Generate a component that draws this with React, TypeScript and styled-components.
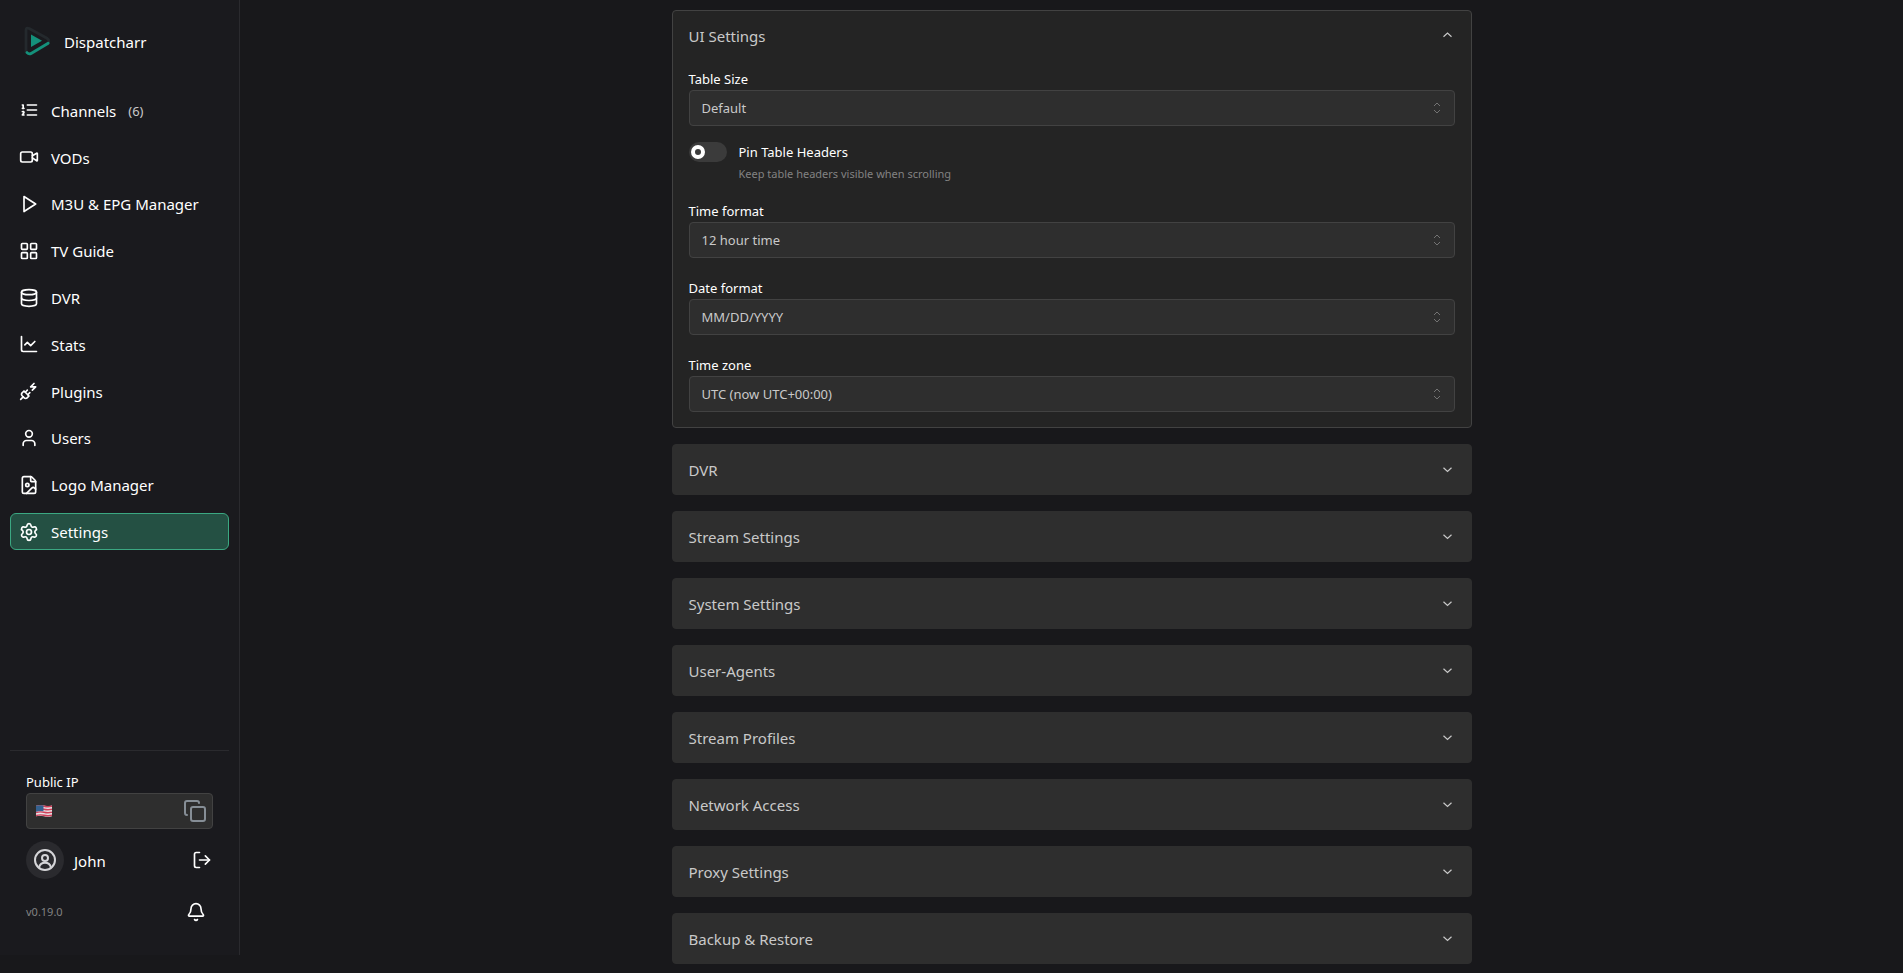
import React from "react";
import styled, { createGlobalStyle } from "styled-components";
import {
  Video, LayoutGrid, Database, ChartLine, PlugZap, User,
  FileImage, Settings, Copy, LogOut, Bell,
} from "lucide-react";

const GlobalStyle = createGlobalStyle`
  *, *::before, *::after { box-sizing: border-box; }
  html, body, #root { height: 100%; }
  body {
    margin: 0;
    background: #18181b;
    color: #fff;
    font: 15px/24px "Segoe UI", "Noto Sans", sans-serif;
  }
  button, input, select { font: inherit; color: inherit; }
`;

const Shell = styled.div`
  display: flex;
  align-items: stretch;
  min-height: 100vh;
  overflow: hidden;
`;

const Sidebar = styled.aside`
  display: flex;
  flex-direction: column;
  flex: none;
  width: 240px;
  margin-bottom: 18px;
  padding: 16px 10px;
  background: #1a1a1e;
  border-right: 1px solid #2a2a2e;
`;

const Brand = styled.div`
  display: flex;
  align-items: center;
  gap: 12px;
  height: 52px;
  padding-left: 12px;
`;

const NavList = styled.ul`
  display: grid;
  grid-auto-rows: 1fr;
  gap: 10px;
  height: 458px;
  margin: 24px 0 0;
  padding: 0;
  list-style: none;
`;

const NavLink = styled.a<{ $active?: boolean }>`
  display: flex;
  align-items: center;
  gap: 12px;
  height: 100%;
  padding: 0 8px;
  border: 1px solid ${(p) => (p.$active ? "#3ba882" : "transparent")};
  border-radius: 6px;
  background: ${(p) => (p.$active ? "#245043" : "transparent")};
  color: #fff;
  text-decoration: none;
`;

const NavText = styled.span`
  padding-top: 1px;
`;

const NavCount = styled.span`
  padding-top: 1px;
  font-size: 13px;
  color: #c9c9c9;
`;

const Footer = styled.div`
  display: flex;
  flex-direction: column;
  margin-top: auto;
  padding: 20px 16px 8px;
  border-top: 1px solid #2a2a2e;
`;

const FieldLabel = styled.label`
  display: block;
  font-size: 13px;
  line-height: 22px;
`;

const IpBox = styled.div`
  display: flex;
  align-items: center;
  height: 36px;
  padding: 0 5px 0 9px;
  border: 1px solid #424242;
  border-radius: 4px;
  background: #2e2e2e;
`;

const IpInput = styled.input`
  flex: 1;
  min-width: 0;
  border: 0;
  background: none;
  outline: 0;
`;

const IconButton = styled.button<{ $color?: string }>`
  display: flex;
  padding: 0;
  border: 0;
  background: none;
  color: ${(p) => p.$color ?? "#fff"};
`;

const UserRow = styled.div`
  display: flex;
  align-items: center;
  gap: 10px;
  margin-top: 12px;
  padding-right: 1px;
`;

const Avatar = styled.div`
  display: grid;
  place-items: center;
  width: 38px;
  height: 38px;
  border-radius: 50%;
  background: #2a2a2e;
  color: #d5d5d8;
`;

const UserName = styled.span`
  flex: 1;
  padding-top: 2px;
`;

const VersionRow = styled.div`
  display: flex;
  align-items: center;
  justify-content: space-between;
  height: 38px;
  margin-top: 14px;
  padding-right: 7px;
  font-size: 11px;
  color: #828282;
`;

const Main = styled.main`
  flex: 1;
  min-width: 0;
  padding: 10px 16px 0;
`;

const Accordion = styled.div`
  display: flex;
  flex-direction: column;
  gap: 16px;
  max-width: 800px;
  margin: 0 auto;
`;

const Item = styled.section<{ $open?: boolean }>`
  border: 1px solid ${(p) => (p.$open ? "#424242" : "#2e2e2e")};
  border-radius: 4px;
  background: ${(p) => (p.$open ? "#242424" : "#2e2e2e")};
`;

const ItemControl = styled.button`
  display: flex;
  align-items: center;
  justify-content: space-between;
  width: 100%;
  height: 49px;
  padding: 0 16px;
  border: 0;
  background: none;
  color: #c9c9c9;
  text-align: left;
`;

const Panel = styled.div`
  display: flex;
  flex-direction: column;
  gap: 19px;
  padding: 8px 16px 15px;
`;

const SelectBox = styled.div`
  display: grid;
  align-items: center;
  > * { grid-area: 1 / 1; }
  > svg { justify-self: end; margin-right: 11px; pointer-events: none; }
`;

const Select = styled.select`
  appearance: none;
  width: 100%;
  height: 36px;
  padding: 0 32px 0 12px;
  border: 1px solid #424242;
  border-radius: 4px;
  background: #2e2e2e;
  color: #c9c9c9;
  font-size: 13px;
`;

const SwitchRow = styled.div`
  display: grid;
  grid-template-columns: 38px 1fr;
  grid-template-rows: 20px auto;
  align-items: center;
  column-gap: 12px;
  margin: -3px 0 -1px;
`;

const Switch = styled.input`
  appearance: none;
  display: flex;
  align-items: center;
  width: 38px;
  height: 20px;
  margin: 0;
  padding: 0 2px;
  border-radius: 10px;
  background: #3b3b3b;
  &::before {
    content: "";
    width: 14px;
    height: 14px;
    border: 4px solid #fff;
    border-radius: 50%;
    background: #3b3b3b;
  }
`;

const Hint = styled.p`
  grid-column: 2;
  margin: 4px 0 0;
  font-size: 11px;
  line-height: 16px;
  color: #828282;
`;

const Logo = () => (
  <svg width="30" height="32" viewBox="0 0 30 32" fill="none" aria-hidden="true">
    <path d="M4 26V4.500Q4 1 7.200 2.500L25 12.300Q27 13.500 26.800 15.500" stroke="#24292d" strokeWidth="2.800" strokeLinecap="round" />
    <path d="M5 26.600Q7 28.800 9.500 27.200L26.200 17.200" stroke="#14917b" strokeWidth="2.800" strokeLinecap="round" />
    <path d="M9 8.500V21L20 14.700Z" fill="#14917b" />
  </svg>
);

type IconProps = { size?: number };

const Outline = ({ size = 20, children }: IconProps & { children: React.ReactNode }) => (
  <svg width={size} height={size} viewBox="0 0 24 24" fill="none" stroke="currentColor" strokeWidth="2" strokeLinecap="round" strokeLinejoin="round" aria-hidden="true">
    {children}
  </svg>
);

const NumberedList = ({ size }: IconProps) => (
  <Outline size={size}>
    <path d="M10 12h11M10 18h11M10 6h11M4 10h2M4 6h1v4M6 18H4c0-1 2-2 2-3s-1-1.500-2-1" />
  </Outline>
);

const PlayTriangle = ({ size }: IconProps) => (
  <Outline size={size}>
    <polygon points="6 3 20 12 6 21 6 3" />
  </Outline>
);

const UserCircle = ({ size }: IconProps) => (
  <Outline size={size}>
    <circle cx="12" cy="12" r="10" />
    <circle cx="12" cy="10" r="3" />
    <path d="M6 19.500a6.200 6.200 0 0 1 12 0" />
  </Outline>
);

const Chevron = ({ up }: { up?: boolean }) => (
  <svg width="15" height="15" viewBox="0 0 15 15" fill="none" aria-hidden="true">
    <path d={up ? "M3.500 8.700L7.500 5L11.500 8.700" : "M3.500 5.700L7.500 9.400L11.500 5.700"} stroke="currentColor" strokeWidth="1.200" />
  </svg>
);

const Selector = () => (
  <svg width="14" height="14" viewBox="0 0 14 14" fill="none" aria-hidden="true">
    <path d="M4 5L7 2L10 5M4 9L7 12L10 9" stroke="#737373" strokeWidth="1" />
  </svg>
);

const Flag = () => (
  <svg width="16" height="12" viewBox="0 0 16 12" aria-hidden="true">
    <path d="M0 .8Q4-.4 8 .6T16 .6V11.200Q12 12.400 8 11.300T0 11.300Z" fill="#e8e4e8" />
    <path d="M0 1.500Q4 .3 8 1.300T16 1.300M0 4.500Q4 3.300 8 4.300T16 4.300M0 7.500Q4 6.300 8 7.300T16 7.300M0 10.500Q4 9.300 8 10.300T16 10.300" stroke="#d0405a" strokeWidth="1.400" fill="none" />
    <path d="M0 .8Q4-.3 7.500 .5V6.300Q4 5.600 0 6.700Z" fill="#35618f" />
  </svg>
);

const nav = [
  { label: "Channels", icon: NumberedList, count: "(6)" },
  { label: "VODs", icon: Video },
  { label: "M3U & EPG Manager", icon: PlayTriangle },
  { label: "TV Guide", icon: LayoutGrid },
  { label: "DVR", icon: Database },
  { label: "Stats", icon: ChartLine },
  { label: "Plugins", icon: PlugZap },
  { label: "Users", icon: User },
  { label: "Logo Manager", icon: FileImage },
  { label: "Settings", icon: Settings, active: true },
];

const sections = [
  "DVR", "Stream Settings", "System Settings", "User-Agents",
  "Stream Profiles", "Network Access", "Proxy Settings", "Backup & Restore",
];

const SelectField = ({ id, label, value }: { id: string; label: string; value: string }) => (
  <div>
    <FieldLabel htmlFor={id}>{label}</FieldLabel>
    <SelectBox>
      <Select id={id} defaultValue={value}>
        <option>{value}</option>
      </Select>
      <Selector />
    </SelectBox>
  </div>
);

export default function App() {
  return (
    <Shell>
      <GlobalStyle />
      <Sidebar>
        <Brand>
          <Logo />
          <span>Dispatcharr</span>
        </Brand>
        <nav>
          <NavList>
            {nav.map(({ label, icon: Icon, count, active }) => (
              <li key={label}>
                <NavLink href="#" $active={active}>
                  <Icon size={20} />
                  <NavText>{label}</NavText>
                  {count && <NavCount>{count}</NavCount>}
                </NavLink>
              </li>
            ))}
          </NavList>
        </nav>
        <Footer>
          <FieldLabel htmlFor="public-ip">Public IP</FieldLabel>
          <IpBox>
            <Flag />
            <IpInput id="public-ip" readOnly />
            <IconButton aria-label="Copy" $color="#868e96">
              <Copy size={24} />
            </IconButton>
          </IpBox>
          <UserRow>
            <Avatar><UserCircle size={24} /></Avatar>
            <UserName>John</UserName>
            <IconButton aria-label="Log out"><LogOut size={20} /></IconButton>
          </UserRow>
          <VersionRow>
            <span>v0.19.0</span>
            <IconButton aria-label="Notifications"><Bell size={20} /></IconButton>
          </VersionRow>
        </Footer>
      </Sidebar>
      <Main>
        <Accordion>
          <Item $open>
            <ItemControl aria-expanded="true">
              <span>UI Settings</span>
              <Chevron up />
            </ItemControl>
            <Panel>
              <SelectField id="table-size" label="Table Size" value="Default" />
              <SwitchRow>
                <Switch type="checkbox" id="pin-headers" />
                <FieldLabel htmlFor="pin-headers">Pin Table Headers</FieldLabel>
                <Hint>Keep table headers visible when scrolling</Hint>
              </SwitchRow>
              <SelectField id="time-format" label="Time format" value="12 hour time" />
              <SelectField id="date-format" label="Date format" value="MM/DD/YYYY" />
              <SelectField id="time-zone" label="Time zone" value="UTC (now UTC+00:00)" />
            </Panel>
          </Item>
          {sections.map((name) => (
            <Item key={name}>
              <ItemControl aria-expanded="false">
                <span>{name}</span>
                <Chevron />
              </ItemControl>
            </Item>
          ))}
        </Accordion>
      </Main>
    </Shell>
  );
}
